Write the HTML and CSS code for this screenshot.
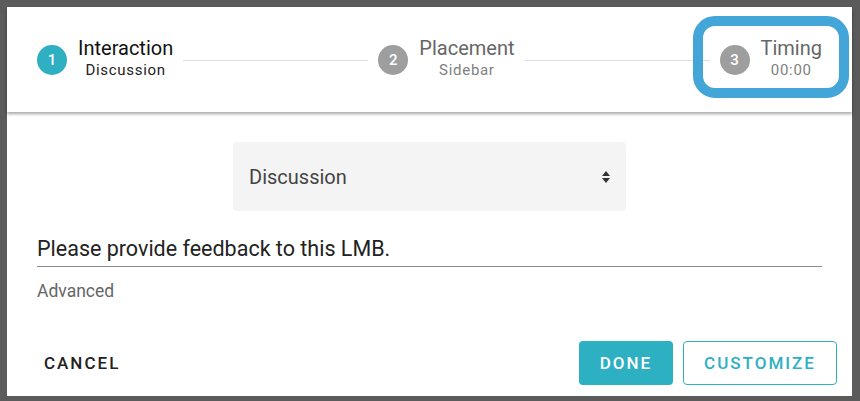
FILE: index.html
```html
<!DOCTYPE html>
<html>
<head>
<meta charset="utf-8">
<link rel="stylesheet" href="styles.css">
</head>
<body>
<div class="dialog">
  <div class="header">
    <div class="stepper">
      <div class="step">
        <span class="circle active">1</span>
        <div class="label"><div class="title">Interaction</div><div class="sub">Discussion</div></div>
      </div>
      <div class="line"></div>
      <div class="step muted">
        <span class="circle">2</span>
        <div class="label"><div class="title">Placement</div><div class="sub">Sidebar</div></div>
      </div>
      <div class="line"></div>
      <div class="step muted">
        <span class="circle">3</span>
        <div class="label"><div class="title">Timing</div><div class="sub">00:00</div></div>
      </div>
    </div>
    <div class="highlight"></div>
  </div>
  <div class="content">
    <div class="select">
      <span>Discussion</span>
      <svg class="arrows" width="8" height="12" viewBox="0 0 8 12"><path d="M4 0 L8 5 L0 5 Z M0 7 L8 7 L4 12 Z" fill="#333"/></svg>
    </div>
    <div class="field">Please provide feedback to this LMB.</div>
    <div class="advanced">Advanced</div>
  </div>
  <div class="footer">
    <button class="btn text">CANCEL</button>
    <div class="right">
      <button class="btn primary">DONE</button>
      <button class="btn outline">CUSTOMIZE</button>
    </div>
  </div>
</div>
</body>
</html>
```
FILE: styles.css
```css
html, body { margin: 0; padding: 0; }
body {
  background: #5b5b5b;
  padding: 7px 8px 5px 7px;
  font-family: Roboto, "Liberation Sans", sans-serif;
}
.dialog {
  width: 845px;
  height: 389px;
  background: #fff;
  display: flex;
  flex-direction: column;
}
.header {
  position: relative;
  height: 105px;
  flex: none;
  box-shadow: 0 2px 3px rgba(0,0,0,0.35);
  display: flex;
  align-items: center;
  padding: 0 30px;
}
.stepper {
  display: flex;
  align-items: center;
  width: 100%;
  margin-top: 1px;
}
.step { display: flex; align-items: center; gap: 11px; }
.circle {
  width: 30px; height: 30px; border-radius: 50%;
  background: #9e9e9e; color: #fff;
  display: flex; align-items: center; justify-content: center;
  font-size: 15px; font-weight: 500;
}
.circle.active { background: #2eafc2; }
.label { text-align: center; margin-top: -4px; }
.title { font-size: 20px; line-height: 24px; color: #111; }
.sub { font-size: 15px; line-height: 20px; color: #222; letter-spacing: 0.7px; }
.muted .title { color: #666; }
.muted .sub { color: #808080; }
.line { flex: 1; height: 1px; background: #dedede; margin: 0 10px 0 10px; }
.highlight {
  position: absolute;
  left: 686px; top: 9px;
  width: 136px; height: 62px;
  border: 10px solid #44a6d8;
  border-radius: 22px;
}
.content {
  padding: 30px 30px 0 30px;
  display: flex;
  flex-direction: column;
}
.select {
  align-self: center;
  width: 393px; height: 69px;
  box-sizing: border-box;
  background: #f4f4f4;
  border-radius: 4px;
  display: flex; align-items: center; justify-content: space-between;
  padding: 0 16px 0 16px;
  font-size: 20px; color: #444;
}
.field {
  margin-top: 25px;
  font-size: 21.5px; line-height: 25px; color: #222;
  padding-bottom: 5px;
  border-bottom: 1px solid #8a8a8a;
}
.advanced {
  margin-top: 14px;
  font-size: 17.5px; line-height: 20px; color: #666;
}
.footer {
  margin-top: auto;
  display: flex; justify-content: space-between; align-items: center;
  padding: 0 15px 11px 30px;
}
.right { display: flex; gap: 10px; }
.btn {
  font-family: Roboto, "Liberation Sans", sans-serif;
  font-size: 17px; font-weight: 500; letter-spacing: 2px;
  height: 44px; border-radius: 4px; cursor: pointer;
  background: none; border: none;
}
.btn.text { color: #222; padding: 0 7px; }
.btn.primary { background: #2eb0c3; color: #fff; width: 94px; padding: 0; }
.btn.outline { border: 1px solid #2eb0c3; color: #2eb0c3; width: 154px; padding: 0; }
```
